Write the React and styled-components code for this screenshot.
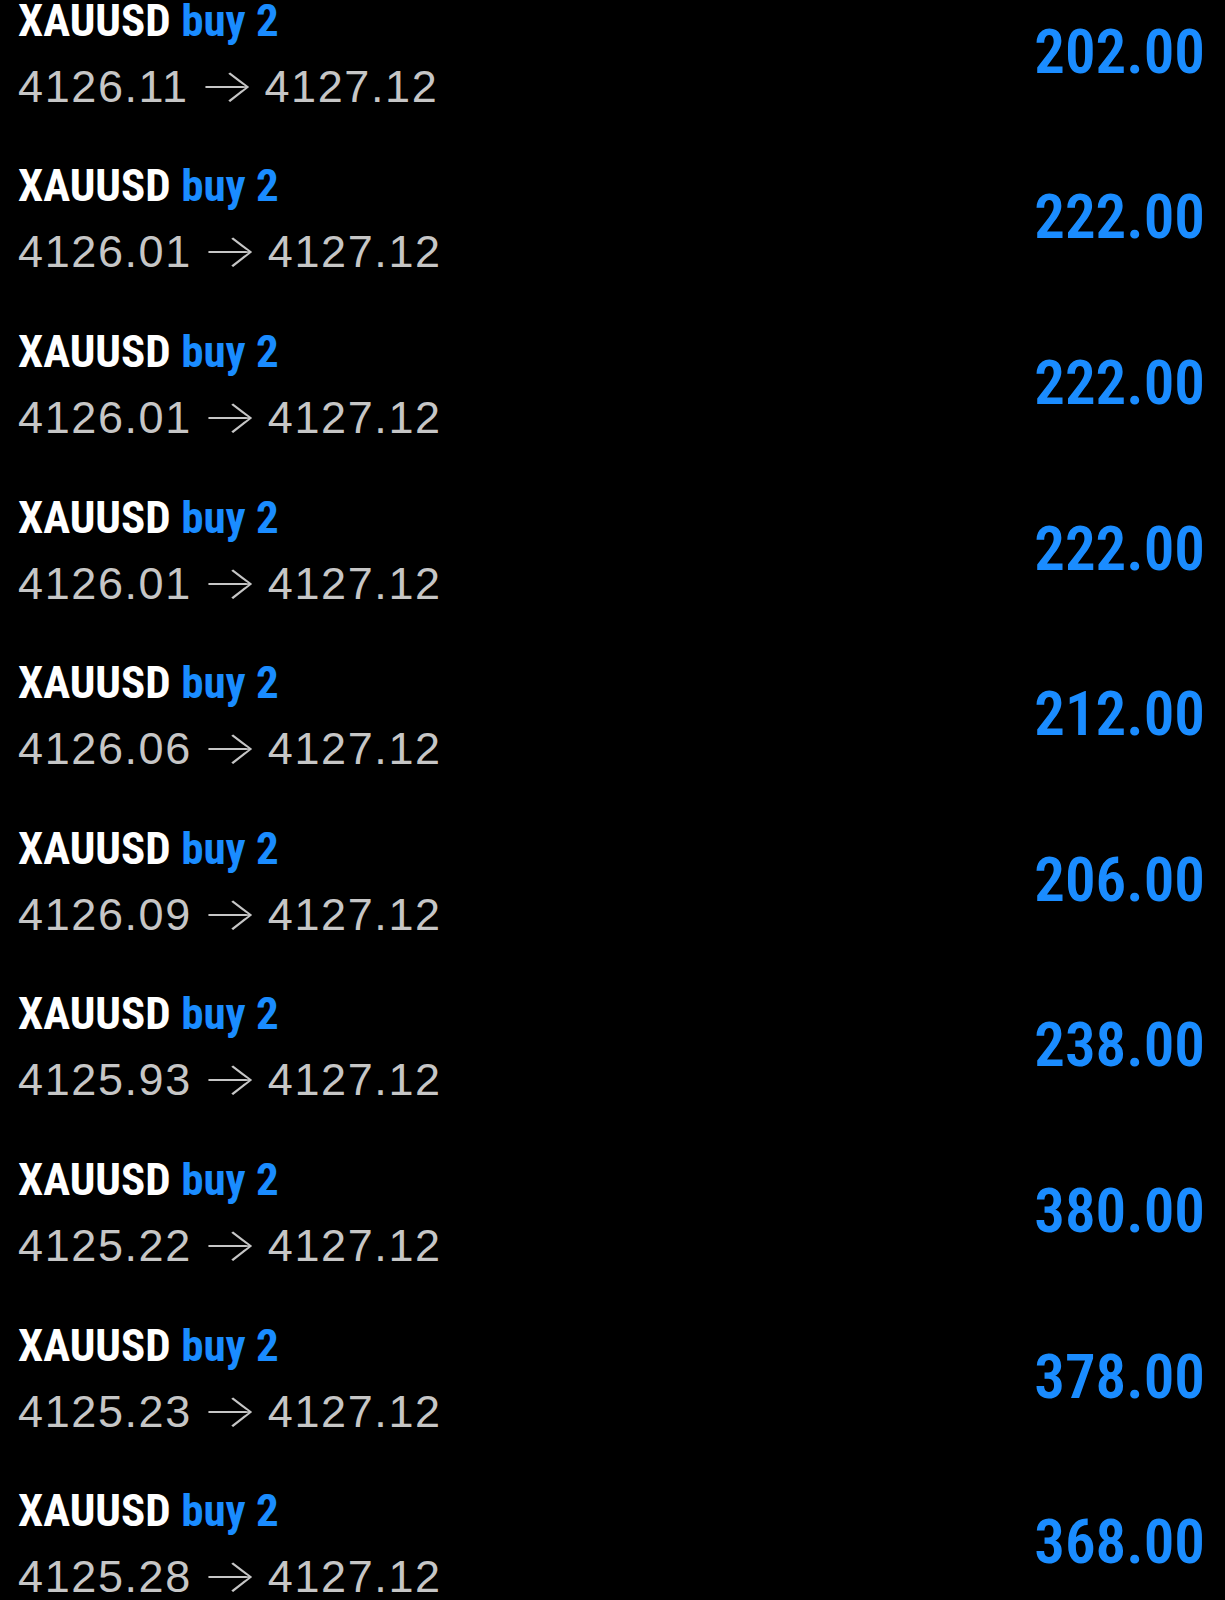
import React from "react";
import styled, { createGlobalStyle } from "styled-components";

const GlobalStyle = createGlobalStyle`
  html, body {
    margin: 0;
    background: #000;
  }
  body {
    font-family: "Liberation Sans", Arial, sans-serif;
    -webkit-font-smoothing: antialiased;
  }
`;

const trades = [
  { open: "4126.11", profit: "202.00" },
  { open: "4126.01", profit: "222.00" },
  { open: "4126.01", profit: "222.00" },
  { open: "4126.01", profit: "222.00" },
  { open: "4126.06", profit: "212.00" },
  { open: "4126.09", profit: "206.00" },
  { open: "4125.93", profit: "238.00" },
  { open: "4125.22", profit: "380.00" },
  { open: "4125.23", profit: "378.00" },
  { open: "4125.28", profit: "368.00" },
];

const Screen = styled.div`
  width: 1225px;
  height: 1600px;
  overflow: hidden;
  background: #000;
`;

// list is scrolled: the first row sits partly above the top edge
const TradeList = styled.ul`
  list-style: none;
  margin: -29px 0 0;
  padding: 0;
`;

const TradeRow = styled.li`
  display: flex;
  align-items: center;
  justify-content: space-between;
  height: 165.6px;
  box-sizing: border-box;
  padding: 0 20px 0 18px;
`;

const TradeInfo = styled.div`
  display: flex;
  flex-direction: column;
  gap: 14px;
`;

const Title = styled.div`
  font-family: Roboto, "Liberation Sans", sans-serif;
  font-stretch: 75%;
  font-weight: 700;
  font-size: 45px;
  line-height: 52px;
  color: #fff;
  white-space: nowrap;
`;

const Side = styled.span`
  color: #1a8cff;
`;

const Prices = styled.div`
  font-family: "Liberation Sans", Arial, sans-serif;
  font-size: 45px;
  line-height: 52px;
  letter-spacing: 1.6px;
  color: #c6c6c6;
  white-space: nowrap;
  display: flex;
  align-items: center;
`;

const Arrow = styled.span`
  display: inline-block;
  font-family: Inter, "DejaVu Sans", sans-serif;
  font-weight: 200;
  font-size: 46px;
  letter-spacing: 0;
  margin: 0 23px 0 9px;
  transform: scaleX(1.3);
  transform-origin: left center;
  position: relative;
  top: -2px;
`;

const Profit = styled.div`
  font-family: Roboto, "Liberation Sans", sans-serif;
  font-stretch: 83%;
  font-weight: 600;
  font-size: 61px;
  line-height: 70px;
  color: #1a8cff;
  margin-top: -4px;
`;

export default function App() {
  return (
    <Screen>
      <GlobalStyle />
      <TradeList>
        {trades.map((t, i) => (
          <TradeRow key={i}>
            <TradeInfo>
              <Title>
                XAUUSD <Side>buy 2</Side>
              </Title>
              <Prices>
                <span>{t.open}</span>
                <Arrow>→</Arrow>
                <span>4127.12</span>
              </Prices>
            </TradeInfo>
            <Profit>{t.profit}</Profit>
          </TradeRow>
        ))}
      </TradeList>
    </Screen>
  );
}
